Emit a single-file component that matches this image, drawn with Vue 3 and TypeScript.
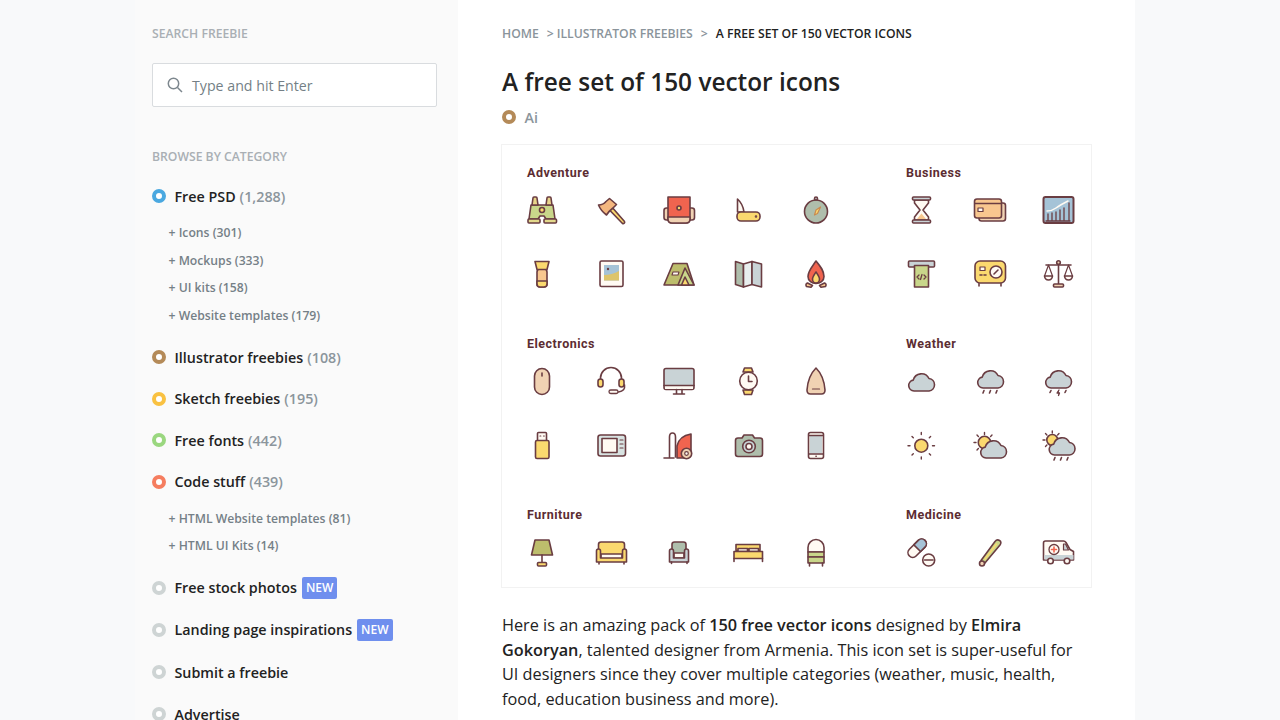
<script setup lang="ts">
const Y = '#fbd96f', G = '#c9d68a', O = '#bdbd6c', R = '#f0644f', P = '#f8c78f', C = '#c9d3d6', S = '#afbeac', B = '#a5c3d7', T = '#f0d2b3', W = '#fffaf3', D = '#6a3d42'

const cloud = (f = C) => `<path fill="${f}" d="M11 28a5.5 5.5 0 0 1-.8-10.9A8.5 8.5 0 0 1 26 15.5a6.3 6.3 0 0 1 0 12.5z"/>`
const cloudUp = `<g transform="translate(0 -3)">${cloud()}</g>`
const rain = (y: number) => `<path d="M12 ${y}l-1 2.5M18.5 ${y}l-1 2.5M25 ${y}l-1 2.5"/>`

const icons: Record<string, string> = {
  binoculars: `<path fill="${G}" d="M7 13h22l2 14H22l-2-3h-4l-2 3H5z"/><path fill="#e8d48a" d="M8 13l1-7q0-1 1-1h2q1 0 1 1l1 7zM22 13l1-7q0-1 1-1h2q1 0 1 1l1 7z"/><rect fill="#e3d98c" x="4" y="27" width="12" height="4" rx="1"/><rect fill="#e3d98c" x="20" y="27" width="12.5" height="4" rx="1"/><circle fill="${Y}" cx="18" cy="18" r="2.5"/>`,
  axe: `<path fill="${Y}" d="M18 14l13.5 15.500a1.500 1.500 0 0 1-2 2L15.500 17z"/><path fill="#f4b77f" d="M5.500 13Q10 13 13 9.500L16.500 6.500 23.500 12.500 20 16Q16 19 13.500 23 8 19 5.500 13z"/>`,
  backpack: `<rect fill="${T}" x="3" y="16" width="6" height="12" rx="2.500"/><rect fill="${T}" x="27" y="16" width="6.500" height="12" rx="2.500"/><path fill="${R}" d="M7 5h22v22q0 4-4 4H11q-4 0-4-4z"/><path fill="${T}" d="M7 25h22v2q0 4-4 4H11q-4 0-4-4z"/><circle fill="${Y}" cx="18" cy="16" r="2"/>`,
  knife: `<path fill="${W}" d="M7.500 7Q13 12 14 20H7.500z"/><rect fill="${Y}" x="7" y="20" width="23" height="9" rx="4"/><circle cx="26" cy="24.500" r=".5"/>`,
  compass: `<circle fill="${S}" cx="18" cy="19.500" r="11.500"/><circle fill="${C}" cx="18" cy="6.500" r="1.500"/><path fill="${Y}" stroke="#c98b50" stroke-width="1.200" d="M22.500 15l-3 6.500-3 1.500 1.500-5z"/>`,
  flashlight: `<rect fill="${P}" x="13" y="13" width="10" height="18" rx="3"/><path fill="${Y}" d="M13 25h10v3q0 3-3 3h-4q-3 0-3-3z"/><path fill="${Y}" d="M11 5.500h14l-2 8H13z"/>`,
  photo: `<rect fill="${W}" x="7" y="5" width="23" height="25.500" rx="1.500"/><rect fill="${B}" x="11" y="9" width="15" height="15.500" stroke-width="0"/><path fill="#ddc46a" stroke-width="0" d="M11 19q8 0 15-4v9.500H11z"/><circle fill="${D}" stroke-width="0" cx="15" cy="13" r="1.200"/>`,
  tent: `<path fill="${O}" d="M3 29 12 7.500h14L33 29z"/><path fill="${G}" d="M17 29l7-17 9 17z"/><path fill="${Y}" d="M20.500 29l3.500-8 4 8z"/><path fill="${W}" stroke-width="1.100" d="M12 16h6l-1 3h-6z"/>`,
  map: `<path fill="${S}" d="M5.500 5.500l8 2.500v23l-8-2.500z"/><path fill="#e8eeee" d="M13.500 8l8.500-2.500v23L13.500 31z"/><path fill="${C}" d="M22 5.500l9.500 2.500v23L22 28.500z"/>`,
  fire: `<path fill="${R}" d="M18 5C23 11 26 15 26 20.500 26 25 22 27.500 18 27.500S10 25 10 20.500C10 15 14 11 18 5z"/><path fill="${Y}" d="M18 16c2 3 3.500 5 3.500 7 0 2-1.500 4-3.500 4s-3.500-2-3.500-4c0-2 1.500-4 3.500-7z"/><path fill="${P}" d="M9.500 27l5 2.500-1.500 1.800-4.500-.8q-1.500-2.500 1-3.500zM26.500 27l-5 2.500 1.500 1.800 4.500-.8q1.500-2.500-1-3.500z"/>`,
  hourglass: `<path fill="${W}" d="M11.500 8h14v3L20 18l5.500 7v3h-14v-3l5.500-7-5.500-7z"/><path fill="${P}" stroke-width="0" d="M18.500 21.500 23 27h-9z"/><rect fill="${C}" x="9.500" y="5" width="18" height="3" rx="1"/><rect fill="${C}" x="9.500" y="28" width="18" height="3" rx="1"/>`,
  card: `<rect fill="${T}" x="7" y="11" width="26.500" height="18" rx="2.500"/><rect fill="${P}" x="2.500" y="7" width="27" height="19" rx="2.500"/><path d="M3 11.500h26"/><rect fill="${W}" stroke-width="1.200" x="6" y="16" width="5" height="3.500"/>`,
  chart: `<rect fill="${B}" stroke-width="2" x="3.500" y="5" width="30" height="26" rx="2"/><path stroke="#fffaf3" stroke-width="1.500" d="M7 19q5 0 9-3t12-7"/><path stroke-width="1.300" d="M8 29v-7M12 29v-8M16 29v-9M20 29v-11M24 29v-13M29 29V11M6 29h24"/>`,
  atm: `<rect fill="${C}" x="5.500" y="5" width="26" height="6" rx="1"/><path fill="${G}" d="M11.500 9.500h14V31h-14z"/><path stroke-width="1.300" d="M16 19l-2 2 2 2M21 19l2 2-2 2M19 18.500l-1.500 5"/>`,
  safe: `<rect fill="${Y}" x="3" y="5" width="30.500" height="22" rx="5"/><circle fill="${W}" cx="24" cy="16" r="6"/><path d="M22 18l4-4M7 27.500V30M29 27.500V30"/><rect fill="${W}" stroke-width="1.200" x="8" y="11" width="5" height="3.500"/><path d="M8 19h2M12 19h2"/>`,
  scales: `<path d="M18.500 8v21M6 9h25"/><circle fill="${T}" cx="18.500" cy="6.500" r="1.800"/><rect fill="${T}" x="13.500" y="28" width="10" height="3" rx="1"/><path fill="${W}" d="M4.500 20h8q-.5 4-4 4t-4-4zM24.500 20h8q-.5 4-4 4t-4-4z"/><path stroke-width="1.200" d="M8.500 9l-4 11M8.500 9l4 11M28.500 9l-4 11M28.500 9l4 11"/>`,
  mouse: `<rect fill="${T}" x="10.500" y="5.500" width="15" height="26" rx="7.500"/><path d="M18 10v3"/>`,
  headset: `<path d="M7.500 17v-2a10.500 10.500 0 0 1 21 0v2"/><rect fill="${Y}" x="5" y="16" width="5" height="8" rx="2.500"/><rect fill="${Y}" x="26" y="16" width="5" height="8" rx="2.500"/><path d="M31.500 22q1 6-6 7"/><rect fill="${W}" stroke-width="1.300" x="16" y="27" width="9" height="3.500" rx="1.700"/>`,
  monitor: `<rect fill="${C}" x="3" y="5.500" width="30" height="21" rx="2"/><rect fill="${W}" stroke-width="0" x="4" y="23" width="28" height="3"/><path d="M3 22.500h30M15.500 26.500v4M21 26.500v4M12.500 31h11"/>`,
  watch: `<path fill="${Y}" d="M13 9l1.500-4h7L23 9zM13 27l1.500 4.500h7L23 27z"/><circle fill="${W}" cx="18.500" cy="18" r="8.800"/><path d="M18.500 13v5.500h3.500"/>`,
  iron: `<path fill="${T}" d="M18 5Q26 13 27 27q0 4-3.500 4H12.500Q9 31 9 27 10 13 18 5z"/><path stroke-width="1.200" d="M14.500 26h7"/>`,
  usb: `<rect fill="${W}" x="13.500" y="5.500" width="9" height="8.500" rx="1"/><rect fill="${Y}" x="11.500" y="13.500" width="13.500" height="18" rx="1.500"/><path stroke-width="1.200" d="M16 9h.8M19.500 9h.8"/>`,
  tv: `<rect fill="#d8e3e2" x="5" y="8" width="27.500" height="21" rx="2.500"/><rect fill="${W}" x="9" y="11.500" width="15" height="14"/><path stroke-width="1.200" d="M27 13h3M27 17h3M27 21h3"/>`,
  vacuum: `<path d="M8.500 30V10q0-4 3-4t3 4v18q0 1.500 0 2M3 31h10"/><path fill="${R}" d="M16 31V19Q18 9 30 7v19l-3 5z"/><circle fill="${T}" cx="25.500" cy="26.500" r="5.200"/><circle fill="${W}" stroke-width="1.200" cx="25.500" cy="26.500" r="1.800"/>`,
  camera: `<path fill="${S}" d="M8 11h4l2-3h8.500l2 3H30q2.500 0 2.500 2.500v13.500q0 2.500-2.500 2.500H8q-2.500 0-2.500-2.500V13.500Q5.500 11 8 11z"/><circle fill="${C}" cx="19" cy="19.500" r="6.300"/><circle fill="${W}" cx="19" cy="19.500" r="3"/>`,
  phone: `<rect fill="${W}" x="10.500" y="5.500" width="15" height="26" rx="2"/><rect fill="${C}" stroke-width="0" x="12" y="9" width="12" height="17.500"/><path d="M11 8.500h14M11 27h14M18 29.300h.2"/>`,
  cloud: cloud(),
  rainCloud: `${cloudUp}${rain(27.5)}`,
  storm: `${cloudUp}<path d="M11 27.500l-1 2M26 27.500l-1 2"/><path stroke-width="1.300" fill="${D}" d="M19 27l-2 3h2.500l-1 2.500"/>`,
  sun: `<circle fill="${Y}" cx="18.300" cy="18.700" r="6.500"/><path stroke-width="1.400" d="M18.300 5.500v2M18.300 30v2M5 18.700h2M29.500 18.700h2M9 9.500l1.300 1.300M26.300 26.800l1.300 1.300M27.600 9.500l-1.300 1.300M9 28.100l1.300-1.300"/>`,
  sunCloud: `<circle fill="${Y}" cx="12.500" cy="15.500" r="6.200"/><path stroke-width="1.400" d="M12.500 5.500v2M2 15.500h2M5 8l1.400 1.400M20 8l-1.400 1.400M5 23l1.400-1.400"/><g transform="translate(3 3)">${cloud()}</g>`,
  sunRain: `<circle fill="${Y}" cx="12.300" cy="13" r="5.500"/><path stroke-width="1.400" d="M12.300 4v2M3 13h2M5.500 6.500l1.400 1.400M19 6.500l-1.400 1.400M5.500 19.500l1.400-1.400"/><g transform="translate(3.500 0)">${cloud()}</g><g transform="translate(3 3)">${rain(27.5)}</g>`,
  lamp: `<path fill="${O}" d="M11 6h14l3.500 15H7.500z"/><path d="M18 21v8"/><rect fill="${Y}" x="13.500" y="28.500" width="9" height="3.500" rx="1"/>`,
  sofa: `<rect fill="${Y}" x="5.500" y="8" width="26" height="15" rx="2.500"/><rect fill="${W}" x="8" y="20" width="21" height="5"/><path fill="${Y}" d="M3.500 17q0-2 2-2t2 2v7h22v-7q0-2 2-2t2 2v11H3.500z"/><path d="M6 28.500v1.500M31 28.500v1.500"/>`,
  armchair: `<rect fill="${S}" x="11" y="8" width="14" height="14" rx="2.500"/><rect fill="${W}" x="13" y="19" width="10" height="5"/><path fill="${C}" d="M8.500 17q0-2 2-2t2 2v7h11v-7q0-2 2-2t2 2v11h-19z"/><path d="M10.500 28v1.500M26 28v1.500"/>`,
  bed: `<path fill="${Y}" d="M6 10.500h24v6H6z"/><path fill="${W}" d="M8 14.500h9.500v3H8zM19 14.500h9.500v3H19z"/><path fill="${Y}" d="M4 17.500h28.500v7H4z"/><path d="M4 24.500v3M32.500 24.500v3"/>`,
  dresser: `<path fill="${W}" d="M10 18v-4.500a8 8 0 0 1 16 0V18z"/><rect fill="${G}" x="10" y="18" width="16" height="5"/><rect fill="${G}" x="10" y="23" width="16" height="6"/><path d="M11.500 29v3M24.500 29v3"/>`,
  pills: `<g transform="rotate(-45 14 14)"><rect fill="${W}" x="3" y="9.500" width="22" height="9.500" rx="4.700"/><path fill="${B}" d="M14 9.500h6.300a4.700 4.700 0 0 1 0 9.500H14z"/></g><circle fill="${W}" cx="25.700" cy="26" r="6"/><path d="M21.500 26h8.500"/>`,
  thermometer: `<path fill="${G}" d="M9 26.500 23 7.500q2-2.500 4.500-1t.5 4.500L12.500 29.500z"/><circle fill="${T}" cx="10" cy="29.500" r="2.500"/><path stroke="${Y}" stroke-width="1.500" d="M24.500 10 13 25"/>`,
  ambulance: `<path fill="${W}" d="M3.500 9q0-2 2-2h18q1.500 0 2.500 1.500l4 7 3.500 2V26H3.500z"/><path fill="${C}" stroke-width="0" d="M4.500 21h29v4.500H4.500z"/><path fill="${C}" stroke-width="1.200" d="M23.500 10h2l3 6h-5z"/><circle fill="${W}" stroke-width="1.300" cx="14" cy="15.500" r="5"/><path stroke="${R}" stroke-width="1.600" d="M14 13v5M11.500 15.500h5"/><circle fill="${W}" cx="10.500" cy="27" r="2.800"/><circle fill="${W}" cx="27" cy="27" r="2.800"/>`,
}

const sections = [
  { title: 'Adventure', columns: 5, icons: ['binoculars', 'axe', 'backpack', 'knife', 'compass', 'flashlight', 'photo', 'tent', 'map', 'fire'] },
  { title: 'Business', columns: 3, icons: ['hourglass', 'card', 'chart', 'atm', 'safe', 'scales'] },
  { title: 'Electronics', columns: 5, icons: ['mouse', 'headset', 'monitor', 'watch', 'iron', 'usb', 'tv', 'vacuum', 'camera', 'phone'] },
  { title: 'Weather', columns: 3, icons: ['cloud', 'rainCloud', 'storm', 'sun', 'sunCloud', 'sunRain'] },
  { title: 'Furniture', columns: 5, icons: ['lamp', 'sofa', 'armchair', 'bed', 'dresser'] },
  { title: 'Medicine', columns: 3, icons: ['pills', 'thermometer', 'ambulance'] },
]

const categories = [
  { name: 'Free PSD', count: '(1,288)', dot: 'blue', subs: ['Icons (301)', 'Mockups (333)', 'UI kits (158)', 'Website templates (179)'] },
  { name: 'Illustrator freebies', count: '(108)', dot: 'brown' },
  { name: 'Sketch freebies', count: '(195)', dot: 'yellow' },
  { name: 'Free fonts', count: '(442)', dot: 'green' },
  { name: 'Code stuff', count: '(439)', dot: 'red', subs: ['HTML Website templates (81)', 'HTML UI Kits (14)'] },
  { name: 'Free stock photos', dot: 'grey', isNew: true },
  { name: 'Landing page inspirations', dot: 'grey', isNew: true },
  { name: 'Submit a freebie', dot: 'grey' },
  { name: 'Advertise', dot: 'grey' },
]
</script>

<template>
  <div class="page">
    <aside class="sidebar">
      <h4 class="label">Search freebie</h4>
      <div class="search">
        <svg class="search-icon" viewBox="0 0 16 16" width="16" height="16">
          <circle cx="6.500" cy="6.500" r="5.200" />
          <path d="M10.500 10.500l4.500 4.500" />
        </svg>
        <span>Type and hit Enter</span>
      </div>
      <h4 class="label browse">Browse by category</h4>
      <ul class="cats">
        <li v-for="c in categories" :key="c.name" class="cat" :class="{ plain: c.dot === 'grey' }">
          <div class="cat-row">
            <i class="dot" :class="c.dot"></i>
            <span class="cat-name">{{ c.name }}</span>
            <span v-if="c.count" class="count">{{ c.count }}</span>
            <span v-if="c.isNew" class="new">NEW</span>
          </div>
          <ul v-if="c.subs" class="subs">
            <li v-for="s in c.subs" :key="s">+ {{ s }}</li>
          </ul>
        </li>
      </ul>
    </aside>
    <main class="main">
      <nav class="crumbs">
        <span>Home</span><span class="sep1">&gt;</span><span>Illustrator freebies</span><span class="sep2">&gt;</span><span class="current">A free set of 150 vector icons</span>
      </nav>
      <h1 class="title">A free set of 150 vector icons</h1>
      <div class="type"><i class="dot brown"></i><span>Ai</span></div>
      <div class="sheet">
        <section v-for="s in sections" :key="s.title" class="group">
          <h5 class="group-title">{{ s.title }}</h5>
          <div class="icons" :class="{ narrow: s.columns === 3 }">
            <svg
              v-for="name in s.icons"
              :key="name"
              class="icon"
              viewBox="0 0 36 36"
              width="36"
              height="36"
              v-html="icons[name]"
            ></svg>
          </div>
        </section>
      </div>
      <p class="copy">
        Here is an amazing pack of <b>150 free vector icons</b> designed by <b>Elmira Gokoryan</b>, talented designer from Armenia. This icon set is super-useful for UI designers since they cover multiple categories (weather, music, health, food, education business and more).
      </p>
    </main>
  </div>
</template>

<style>
html, body { margin: 0; height: 720px; overflow: hidden; background: #f8f9fa; }
</style>

<style scoped>
.page {
  display: flex;
  width: 1000px;
  height: 720px;
  margin-left: 135px;
  overflow: hidden;
  font-family: "Open Sans", sans-serif;
  color: #222;
}
.sidebar {
  width: 323px;
  flex: none;
  box-sizing: border-box;
  padding: 26px 21px 0 17px;
  background: #fafafa;
}
.label {
  margin: 0;
  font-size: 12.200px;
  line-height: 16px;
  font-weight: 600;
  color: #a9afb4;
  text-transform: uppercase;
}
.search {
  display: flex;
  align-items: center;
  gap: 9px;
  height: 44px;
  box-sizing: border-box;
  margin-top: 21px;
  padding-left: 14px;
  background: #fff;
  border: 1px solid #d9dcdf;
  border-radius: 2px;
  font-size: 14.200px;
  color: #747f86;
}
.search-icon { fill: none; stroke: #7d878e; stroke-width: 1.500; }
.browse { margin-top: 42px; }
.cats, .subs { list-style: none; margin: 0; padding: 0; }
.cats { margin-top: 21px; }
.cat { margin-bottom: 21.500px; }
.cat.plain { margin-bottom: 22.300px; }
.cat-row {
  display: flex;
  align-items: center;
  height: 20px;
  font-size: 14.300px;
  font-weight: 600;
}
.dot {
  flex: none;
  width: 14px;
  height: 14px;
  box-sizing: border-box;
  border: 4px solid #ccc;
  border-radius: 50%;
  background: #fff;
  margin-right: 8.500px;
}
.blue { border-color: #4aa8e0; }
.brown { border-color: #b48a58; }
.yellow { border-color: #f9c141; }
.green { border-color: #9ad77f; }
.red { border-color: #f57d5f; }
.grey { border-color: #ced4d4; }
.count { margin-left: 4px; color: #8b959c; }
.new {
  margin-left: 5px;
  padding: 0 4px;
  height: 22px;
  line-height: 22px;
  background: #6f8fee;
  border-radius: 2px;
  color: #fff;
  font-size: 12px;
  font-weight: 600;
}
.subs {
  margin: 13px 0 -3.500px 16.500px;
  font-size: 12.200px;
  line-height: 27.500px;
  font-weight: 600;
  color: #758087;
}
.main {
  flex: 1;
  box-sizing: border-box;
  padding: 26px 43px 0 44px;
  background: #fff;
}
.crumbs {
  font-size: 12.200px;
  line-height: 16px;
  font-weight: 600;
  text-transform: uppercase;
  color: #8a949b;
  white-space: nowrap;
}
.sep1 { margin: 0 3px 0 8px; }
.sep2 { margin: 0 8px; }
.current { color: #222; }
.title {
  margin: 24px 0 0;
  font-size: 24.400px;
  line-height: 32px;
  font-weight: 600;
}
.type {
  display: flex;
  align-items: center;
  height: 20px;
  margin-top: 9px;
  font-size: 14.300px;
  font-weight: 600;
  color: #8b959c;
}
.sheet {
  display: grid;
  grid-template-columns: 379px 1fr;
  align-content: start;
  row-gap: 42.500px;
  box-sizing: border-box;
  width: 591px;
  height: 444px;
  margin: 17px 0 0 -1px;
  padding: 18.500px 0 0 22px;
  border: 1px solid #f2f2f2;
}
.group-title {
  margin: 0 0 10.500px 3px;
  height: 18px;
  font-family: Roboto, sans-serif;
  font-size: 12.500px;
  line-height: 18px;
  font-weight: 700;
  letter-spacing: .5px;
  color: #5c2d32;
}
.icons {
  display: grid;
  grid-template-columns: repeat(5, 36px);
  column-gap: 32.500px;
  row-gap: 28px;
}
.icons.narrow { grid-template-columns: repeat(3, 36px); }
.icon {
  display: block;
  fill: none;
  stroke: #6a3d42;
  stroke-width: 1.600;
  stroke-linejoin: round;
  stroke-linecap: round;
}
.copy {
  margin: 25px 0 0;
  width: 590px;
  font-size: 16.250px;
  line-height: 24.500px;
}
.copy b { font-weight: 600; }
</style>
